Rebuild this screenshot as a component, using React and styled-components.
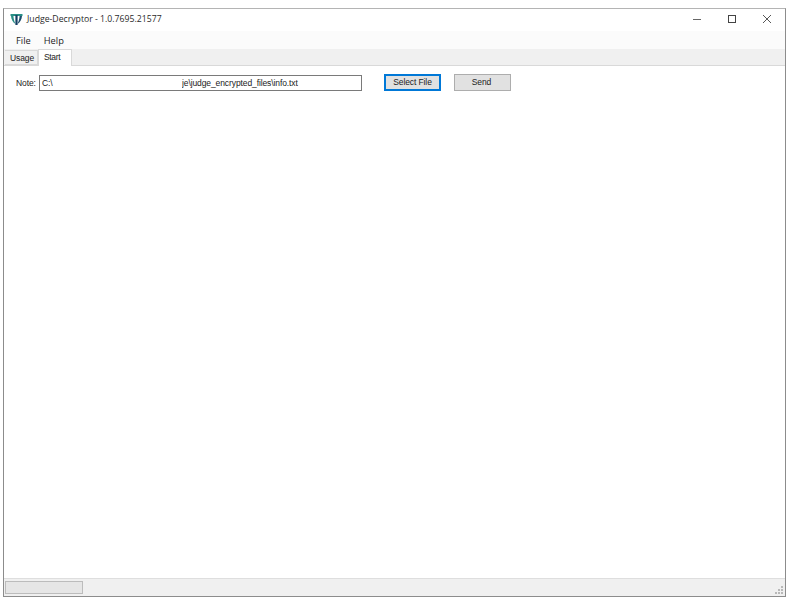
import React from "react";
import styled, { createGlobalStyle } from "styled-components";

const GlobalStyle = createGlobalStyle`
  html, body {
    margin: 0;
    padding: 0;
    background: #ffffff;
  }
  body {
    font-family: "Open Sans", "Noto Sans", sans-serif;
  }
`;

const Page = styled.div`
  width: 790px;
  height: 605px;
  padding: 8px 0 0 3px;
  box-sizing: border-box;
  overflow: hidden;
`;

const Window = styled.div`
  width: 783px;
  height: 589px;
  box-sizing: border-box;
  border: 1px solid #8c8c8c;
  border-top-color: #b4b4b4;
  display: flex;
  flex-direction: column;
  background: #f0f0f0;
`;

const TitleBar = styled.div`
  height: 22px;
  box-sizing: border-box;
  padding: 0 1px 2px 6px;
  background: #ffffff;
  display: flex;
  align-items: center;
  gap: 4px;
  flex: none;
`;

const TitleText = styled.span`
  font-size: 8.7px;
  color: #2a2a2a;
  flex: 1;
  white-space: nowrap;
`;

const CaptionButtons = styled.div`
  display: flex;
  align-items: center;
`;

const CaptionButton = styled.div`
  width: 35px;
  height: 20px;
  display: flex;
  align-items: center;
  justify-content: center;
`;

const MenuBar = styled.div`
  height: 18px;
  flex: none;
  background: #fbfbfb;
  display: flex;
  align-items: center;
  padding-left: 5px;
  gap: 13px;
`;

const MenuItem = styled.span`
  font-size: 9.3px;
  color: #1c1c1c;
  &:first-child {
    margin-left: 7px;
  }
`;

const TabStrip = styled.div`
  height: 16px;
  flex: none;
  display: flex;
  align-items: flex-end;
  padding-left: 1px;
  background: #f0f0f0;
  position: relative;
  z-index: 1;
`;

const Tab = styled.div`
  font-family: "Liberation Sans", sans-serif;
  font-size: 8.5px;
  letter-spacing: ${(p) => (p.$active ? "-0.35px" : "-0.1px")};
  color: #222222;
  box-sizing: border-box;
  display: flex;
  background: ${(p) => (p.$active ? "#ffffff" : "#f0f0f0")};
  border: 1px solid #d9d9d9;
  border-bottom: ${(p) => (p.$active ? "none" : "1px solid #d9d9d9")};
  border-left: ${(p) => (p.$active ? "1px solid #d9d9d9" : "none")};
  width: ${(p) => p.$width}px;
  height: ${(p) => (p.$active ? 17 : 15)}px;
  align-items: ${(p) => (p.$active ? "flex-start" : "center")};
  padding: ${(p) => (p.$active ? "2px 0 0 5px" : "1px 0 0 5px")};
  margin-bottom: ${(p) => (p.$active ? "-1px" : "0")};
`;

const TabPage = styled.div`
  flex: 1;
  background: #ffffff;
  border-top: 1px solid #d9d9d9;
  padding: 8px 0 0 12px;
`;

const Row = styled.div`
  display: flex;
  align-items: center;
  font-family: "Liberation Sans", sans-serif;
  font-size: 8.5px;
  letter-spacing: -0.1px;
  color: #222222;
`;

const NoteLabel = styled.label`
  width: 23px;
  flex: none;
`;

const PathField = styled.div`
  width: 323px;
  height: 16px;
  box-sizing: border-box;
  border: 1px solid #7a7a7a;
  display: flex;
  align-items: center;
  justify-content: space-between;
  padding: 0 0 0 2px;
  flex: none;
`;

const PathEnd = styled.span`
  width: 179px;
  white-space: nowrap;
  overflow: hidden;
`;

const Button = styled.button`
  font-family: "Liberation Sans", sans-serif;
  font-size: 8.5px;
  letter-spacing: -0.1px;
  color: #222222;
  width: 57px;
  height: 17px;
  padding: 0 ${(p) => (p.$focused ? 0 : 2)}px 2px 0;
  box-sizing: border-box;
  background: #e1e1e1;
  border: ${(p) => (p.$focused ? "2px solid #0078d7" : "1px solid #adadad")};
  margin-left: ${(p) => p.$gap}px;
  flex: none;
`;

const StatusBar = styled.div`
  height: 18px;
  flex: none;
  box-sizing: border-box;
  background: #f0f0f0;
  border-top: 1px solid #dedede;
  display: flex;
  align-items: center;
  justify-content: space-between;
  padding: 0 1px 0 1px;
`;

const ProgressBar = styled.div`
  width: 78px;
  height: 13px;
  box-sizing: border-box;
  background: #e6e6e6;
  border: 1px solid #bcbcbc;
`;

const Grip = styled.svg`
  align-self: flex-end;
  margin-bottom: 1px;
`;

const AppIcon = () => (
  <svg width="13" height="13" viewBox="0 0 13 13">
    <path d="M0.5 1 H12.5 V3 H0.5 Z" fill="#2a8f86" />
    <path d="M1 3 H3.4 C3.6 6 4.4 8.6 5.6 11 C3 9.6 1.2 6.6 1 3 Z" fill="#2a8f86" />
    <path d="M12 3 H9.6 C9.4 6 8.6 8.6 7.4 11 C10 9.6 11.8 6.6 12 3 Z" fill="#1d4f6e" />
    <path d="M5.4 2 H7.6 V12 H5.4 Z" fill="#153f63" />
  </svg>
);

const App = () => (
  <>
    <GlobalStyle />
    <Page>
      <Window>
        <TitleBar>
          <AppIcon />
          <TitleText>Judge-Decryptor - 1.0.7695.21577</TitleText>
          <CaptionButtons>
            <CaptionButton>
              <svg width="10" height="10" viewBox="0 0 10 10">
                <path d="M1 5.5 H9" stroke="#666" strokeWidth="1" />
              </svg>
            </CaptionButton>
            <CaptionButton>
              <svg width="10" height="10" viewBox="0 0 10 10">
                <rect x="1.5" y="1.5" width="7" height="7" fill="none" stroke="#444" strokeWidth="1" />
              </svg>
            </CaptionButton>
            <CaptionButton>
              <svg width="10" height="10" viewBox="0 0 10 10">
                <path d="M1 1 L9 9 M9 1 L1 9" stroke="#444" strokeWidth="0.9" />
              </svg>
            </CaptionButton>
          </CaptionButtons>
        </TitleBar>
        <MenuBar>
          <MenuItem>File</MenuItem>
          <MenuItem>Help</MenuItem>
        </MenuBar>
        <TabStrip>
          <Tab $width={33}>Usage</Tab>
          <Tab $active $width={34}>Start</Tab>
        </TabStrip>
        <TabPage>
          <Row>
            <NoteLabel>Note:</NoteLabel>
            <PathField>
              <span>C:\</span>
              <PathEnd>je\judge_encrypted_files\info.txt</PathEnd>
            </PathField>
            <Button $focused $gap={22}>Select File</Button>
            <Button $gap={13}>Send</Button>
          </Row>
        </TabPage>
        <StatusBar>
          <ProgressBar />
          <Grip width="10" height="10" viewBox="0 0 10 10">
            <g fill="#b8b8b8">
              <rect x="7" y="1" width="2" height="2" />
              <rect x="4" y="4" width="2" height="2" />
              <rect x="7" y="4" width="2" height="2" />
              <rect x="1" y="7" width="2" height="2" />
              <rect x="4" y="7" width="2" height="2" />
              <rect x="7" y="7" width="2" height="2" />
            </g>
          </Grip>
        </StatusBar>
      </Window>
    </Page>
  </>
);

export default App;
